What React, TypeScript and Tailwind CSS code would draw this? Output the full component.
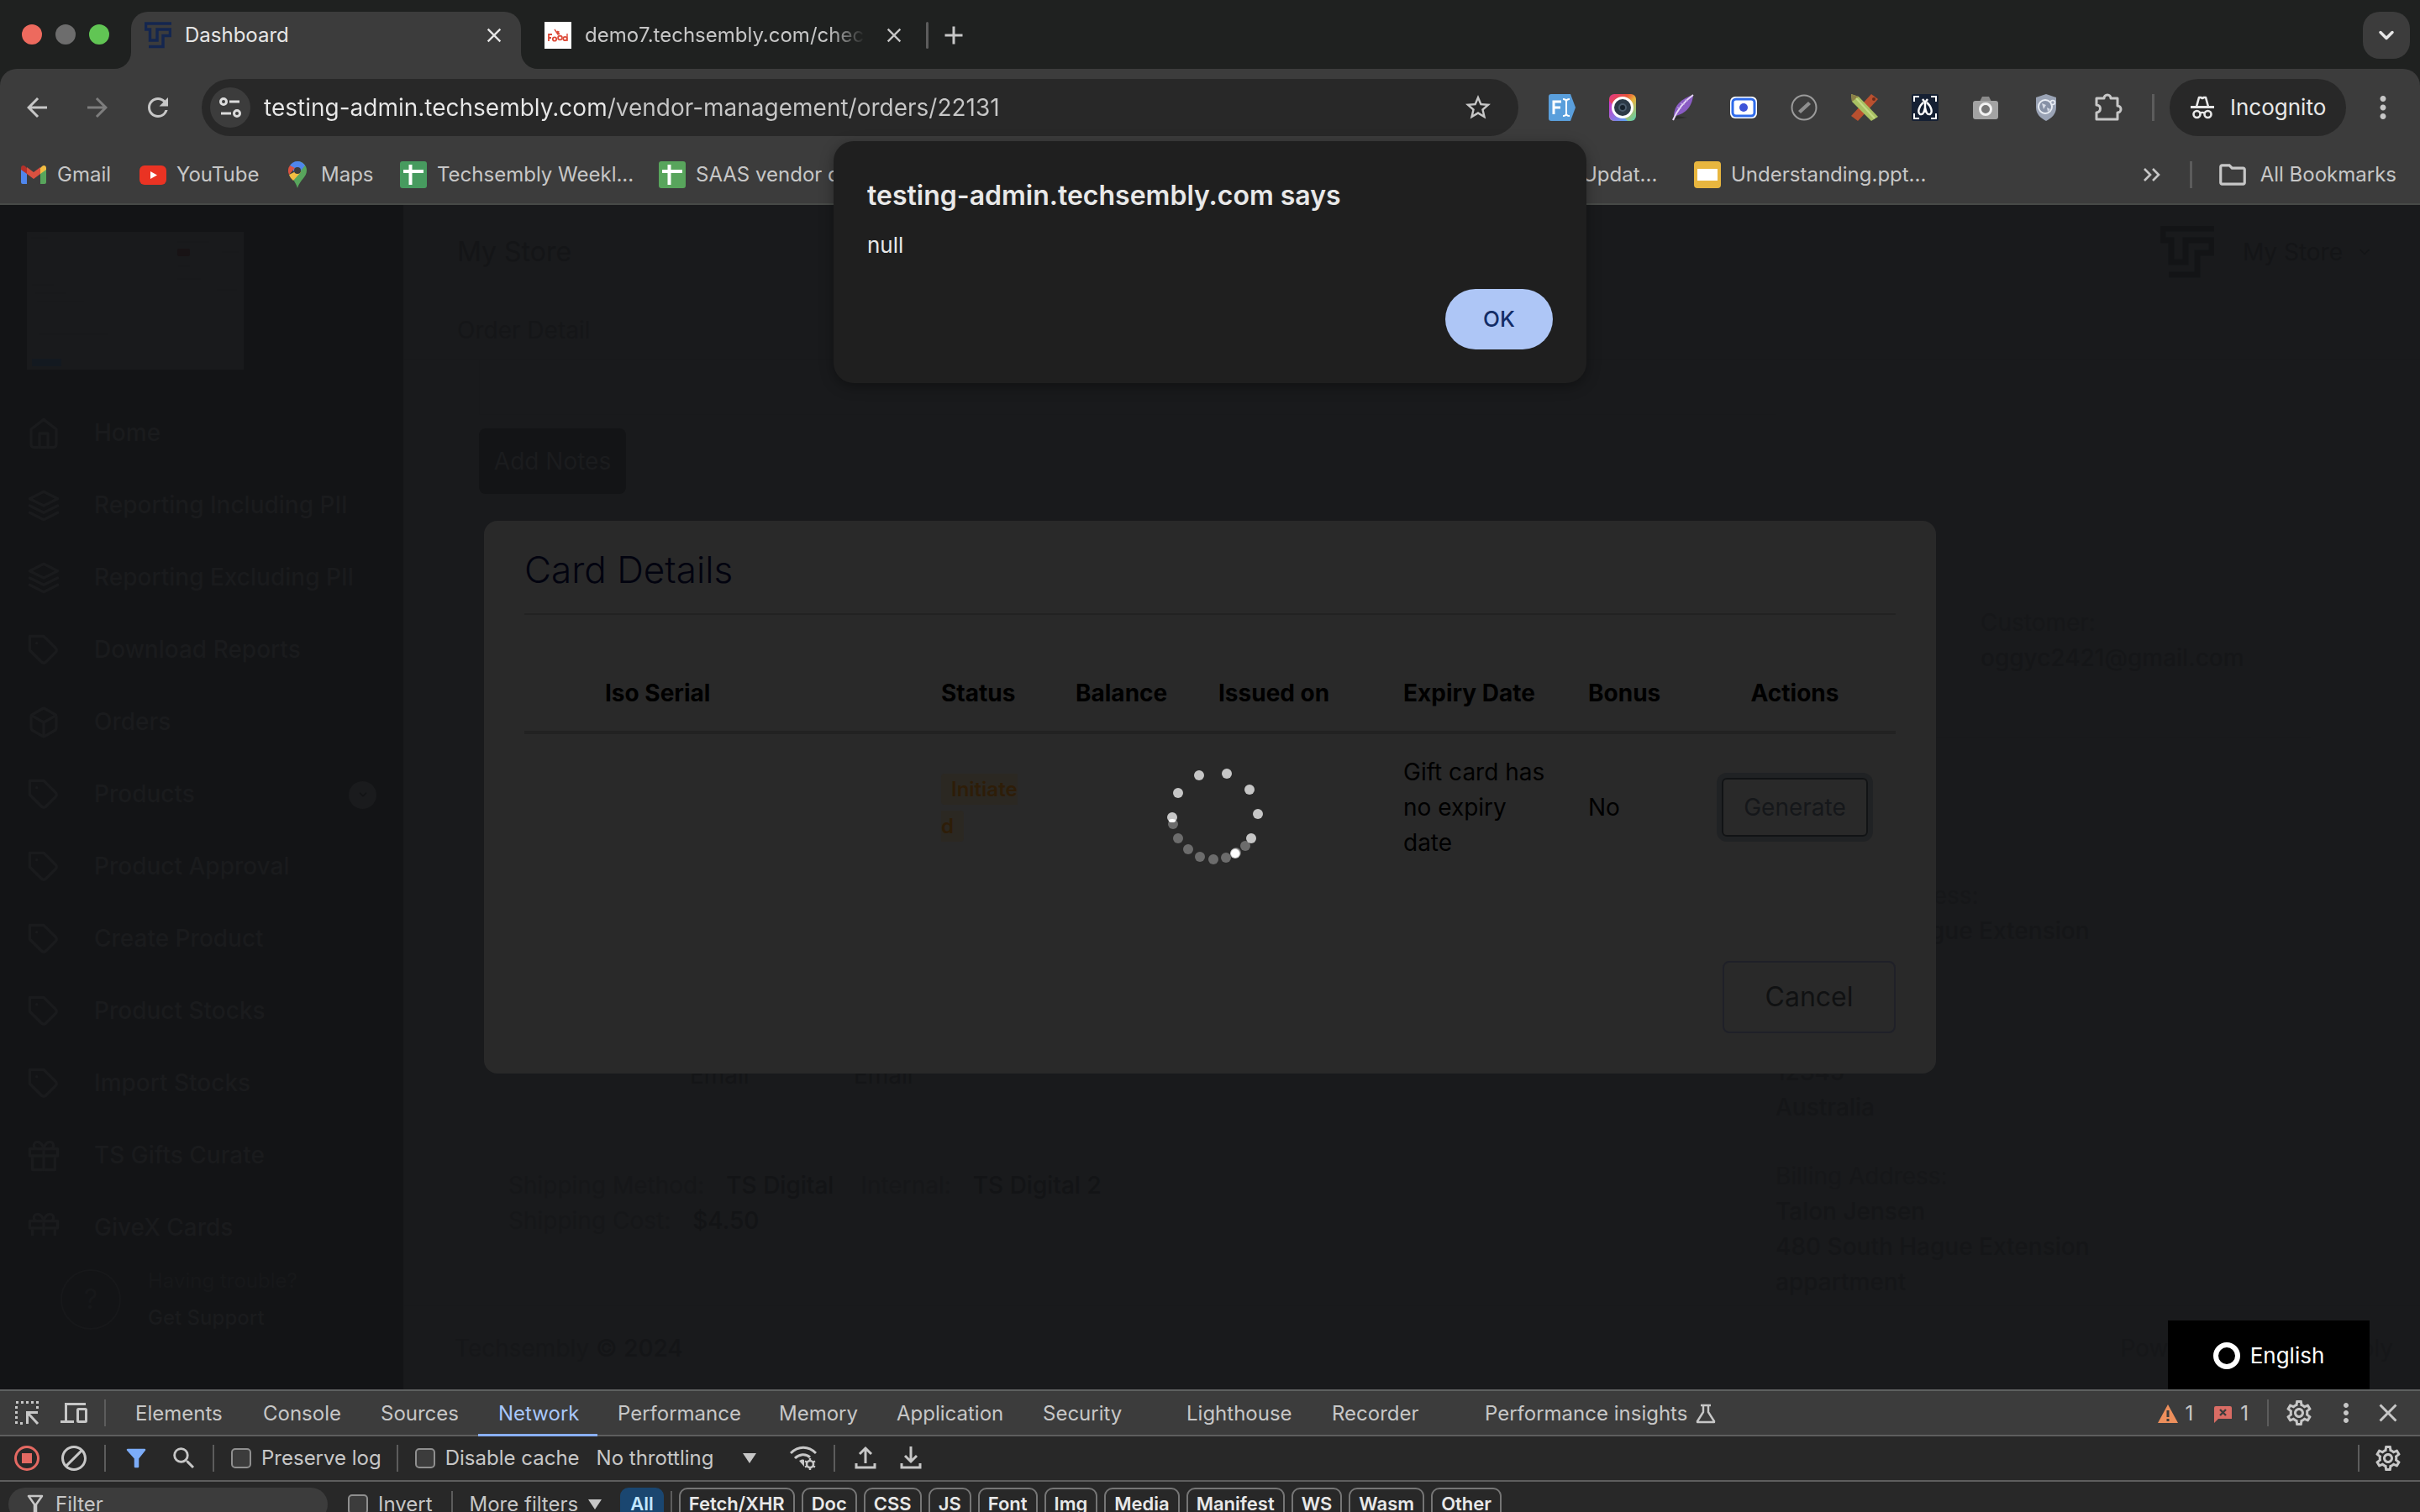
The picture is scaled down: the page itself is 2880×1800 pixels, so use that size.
import type { ReactNode } from "react";
import { FiBox, FiChevronDown, FiGift, FiHome, FiLayers, FiTag } from "react-icons/fi";
import {
  MdAdd,
  MdArrowBack,
  MdArrowForward,
  MdBlock,
  MdClose,
  MdMoreVert,
  MdOutlineFolder,
  MdOutlineSettings,
  MdRefresh,
  MdSearch,
  MdStarBorder,
} from "react-icons/md";

/* ---------- logos and icons ---------- */

function TsLogo({ className }: { className: string }) {
  return (
    <svg viewBox="0 0 64 62" className={className} fill="none" stroke="currentColor" strokeWidth="7" aria-hidden="true">
      <path d="M64 3H3V17H13V43H30V17H61V32H44V58H10" />
    </svg>
  );
}

function FoodLogo() {
  return (
    <svg viewBox="0 0 32 32" className="h-8 w-8 shrink-0" aria-hidden="true">
      <rect width="32" height="32" fill="#fff" />
      <g fill="none" stroke="#dd4b39" strokeWidth="1.8">
        <path d="M5 23V15h4M5 19h3" />
        <circle cx="12" cy="20.500" r="2.200" />
        <circle cx="18.500" cy="19" r="2.400" />
        <circle cx="24.500" cy="20" r="2.200" />
        <path d="M27 14v9M12 9l4 6 1-4M15 11l3 4" strokeWidth="1.400" />
      </g>
    </svg>
  );
}

function SiteInfoIcon() {
  return (
    <svg viewBox="0 0 28 28" className="h-7 w-7" fill="none" stroke="#dcdcdc" strokeWidth="3" aria-hidden="true">
      <circle cx="6" cy="7" r="3.500" />
      <path d="M13 7h12M3 21h12" />
      <circle cx="22" cy="21" r="3.500" />
    </svg>
  );
}

function GmailIcon() {
  return (
    <svg viewBox="0 0 32 32" className="h-8 w-8 shrink-0" aria-hidden="true">
      <path d="M1 8v17a2 2 0 0 0 2 2h5V13z" fill="#4f86ec" />
      <path d="M31 8v17a2 2 0 0 1-2 2h-5V13z" fill="#58a55c" />
      <path d="M24 8v7l7-5V8c0-3-3-4-5-2z" fill="#f2bd42" />
      <path d="M8 8v7l-7-5V8c0-3 3-4 5-2z" fill="#b5312a" />
      <path d="M8 7l8 6 8-6v8l-8 6-8-6z" fill="#d95140" />
    </svg>
  );
}

function YouTubeIcon() {
  return (
    <svg viewBox="0 0 32 32" className="h-8 w-8 shrink-0" aria-hidden="true">
      <rect x="0" y="5" width="32" height="23" rx="6" fill="#ea3323" />
      <path d="M13 12l8 4.500-8 4.500z" fill="#fff" />
    </svg>
  );
}

function MapsIcon() {
  return (
    <svg viewBox="0 0 32 32" className="h-8 w-8 shrink-0" aria-hidden="true">
      <path d="M16 0a11 11 0 0 1 11 11c0 8-8 11-11 21-1-4-3-7-5-10z" fill="#58a55c" />
      <path d="M16 0c4 0 7 2 9 5L15 17 7 5c2-3 5-5 9-5z" fill="#4f86ec" />
      <path d="M7 5a11 11 0 0 0-1 11l7-8z" fill="#d95140" />
      <path d="M6 16c1 3 3 5 5 7l9-10-6-1z" fill="#f2bd42" />
      <circle cx="16" cy="11" r="4" fill="#3c3c3c" />
    </svg>
  );
}

function SheetIcon({ color }: { color: string }) {
  return (
    <svg viewBox="0 0 32 32" className="h-8 w-8 shrink-0" aria-hidden="true">
      <rect width="32" height="32" rx="3" fill={color} />
      <path d="M12.500 4v24M4 12h24" stroke="#fff" strokeWidth="4" />
    </svg>
  );
}

function SlidesIcon() {
  return (
    <svg viewBox="0 0 32 32" className="h-8 w-8 shrink-0" aria-hidden="true">
      <rect width="32" height="32" rx="4" fill="#e8b63f" />
      <rect x="4" y="9" width="24" height="14" fill="#fff" />
    </svg>
  );
}

function IncognitoIcon() {
  return (
    <svg viewBox="0 0 30 28" className="h-7 w-[30px]" fill="none" stroke="#e8e8e8" aria-hidden="true">
      <path d="M1 13.500h28" strokeWidth="3" />
      <path d="M8 13l3-11h2l2 1 2-1h2l3 11" strokeWidth="2.600" strokeLinejoin="round" />
      <circle cx="8.500" cy="22" r="4" strokeWidth="2.600" />
      <circle cx="21.500" cy="22" r="4" strokeWidth="2.600" />
      <path d="M12 21c2-1.500 4-1.500 6 0" strokeWidth="2.400" />
    </svg>
  );
}

function PuzzleIcon() {
  return (
    <svg viewBox="0 0 36 36" className="h-9 w-9" fill="none" stroke="#c7c7c7" strokeWidth="3" strokeLinejoin="round" aria-hidden="true">
      <path d="M4 7h9a4 4 0 0 1 8 0h8v9a4 4 0 0 1 0 8v8H4v-8c6-1 6-9 0-9z" />
    </svg>
  );
}

const extensionIcons: { name: string; art: ReactNode }[] = [
  {
    name: "Form filler",
    art: (
      <>
        <path d="M3 0h23l6 16-6 16H3a3 3 0 0 1-3-3V3a3 3 0 0 1 3-3z" fill="#5a9fdc" />
        <path d="M6 24V9h9M6 16h8" fill="none" stroke="#fff" strokeWidth="3" />
        <path d="M17 6c3 0 4 1 4 3v14c0 2-1 3-4 3M25 6c-3 0-4 1-4 3v14c0 2 1 3 4 3" fill="none" stroke="#fff" strokeWidth="2" />
      </>
    ),
  },
  {
    name: "Screen capture",
    art: (
      <>
        <defs>
          <linearGradient id="capture-a" x1="0" y1="0" x2="1" y2="1">
            <stop offset="0" stopColor="#e0368c" />
            <stop offset=".35" stopColor="#e8533a" />
            <stop offset=".55" stopColor="#e9b23c" />
            <stop offset="1" stopColor="#4fd0b5" />
          </linearGradient>
          <linearGradient id="capture-b" x1="0" y1="0" x2="1" y2="1">
            <stop offset="0" stopColor="#d433c8" />
            <stop offset="1" stopColor="#55a8f5" />
          </linearGradient>
        </defs>
        <rect width="32" height="32" rx="6" fill="url(#capture-a)" />
        <path d="M0 8v18a6 6 0 0 0 6 6h16z" fill="url(#capture-b)" />
        <circle cx="16" cy="16" r="11.500" fill="#2c3a47" stroke="#fff" strokeWidth="3" />
        <circle cx="16" cy="16" r="4" fill="#16212b" stroke="#4a5b6b" strokeWidth="2" />
      </>
    ),
  },
  {
    name: "Feather",
    art: (
      <>
        <path d="M5 30l16-2-12-2z" fill="#2c2c2c" />
        <path d="M28 1C14 5 5 14 5 26c12-1 22-10 23-25z" fill="#8a5cc4" />
        <path d="M28 1C18 8 10 17 4 31" fill="none" stroke="#e6d8f5" strokeWidth="2" />
        <path d="M9 16l5 1M13 11l5 1M18 7l4 1" stroke="#c9aee8" strokeWidth="1" />
      </>
    ),
  },
  {
    name: "Recorder",
    art: (
      <>
        <rect x="0" y="3" width="32" height="26" rx="6" fill="#fff" />
        <rect x="3" y="6" width="26" height="20" rx="4" fill="none" stroke="#2f6bea" strokeWidth="3" />
        <circle cx="16" cy="16" r="5" fill="#3d53d8" />
      </>
    ),
  },
  {
    name: "Ruler",
    art: (
      <>
        <circle cx="16" cy="16" r="14.500" fill="none" stroke="#9b9b9b" strokeWidth="2" />
        <path d="M9 20L21 9l3 3-12 11z" fill="#8f8f8f" />
      </>
    ),
  },
  {
    name: "Pencils",
    art: (
      <>
        <path d="M24 0l8 6L8 32l-8-6z" fill="#b9502f" />
        <circle cx="27" cy="6" r="2" fill="#6b2c1a" />
        <path d="M0 0l9 3 23 24-8 5L1 9z" fill="#a9c163" />
        <path d="M0 0l9 3-8 6z" fill="#8c8047" />
        <path d="M6 5l22 24" stroke="#c5da85" strokeWidth="2" />
      </>
    ),
  },
  {
    name: "Code capture",
    art: (
      <>
        <rect width="32" height="32" rx="2" fill="#152033" />
        <path d="M3 9V3h6M23 3h6v6M29 23v6h-6M9 29H3v-6" fill="none" stroke="#fff" strokeWidth="2" />
        <path d="M13 6l3 4 3-4M16 10v12M14 10c-6 5-7 12-4 14 4 1 5-3 6-8M18 10c6 5 7 12 4 14-4 1-5-3-6-8" fill="none" stroke="#fff" strokeWidth="2.400" />
      </>
    ),
  },
  {
    name: "Camera",
    art: (
      <>
        <path d="M9 9l3-6h8l3 6z" fill="#8b8b8b" />
        <rect x="1" y="8" width="30" height="22" rx="3" fill="#a3a3a3" />
        <circle cx="16" cy="18" r="6.500" fill="#777" stroke="#f2f2f2" strokeWidth="3" />
      </>
    ),
  },
  {
    name: "Shield",
    art: (
      <>
        <path d="M16 0l12 4v12c0 8-6 13-12 16C10 29 4 24 4 16V4z" fill="#9aa3b5" />
        <circle cx="15" cy="15" r="8" fill="#8791a6" stroke="#e9edf4" strokeWidth="2" />
        <path d="M11 11l5 2-3 5zM17 16l4 2-3 3z" fill="#d5dae5" />
        <circle cx="24" cy="10" r="2.500" fill="#9aa3b5" stroke="#e9edf4" strokeWidth="1.500" />
      </>
    ),
  },
];

function FunnelIcon({ className, filled }: { className: string; filled?: boolean }) {
  return (
    <svg viewBox="0 0 24 24" className={className} fill={filled ? "currentColor" : "none"} stroke="currentColor" strokeWidth="2.500" aria-hidden="true">
      <path d={filled ? "M2 2h20l-8 10v10h-3V12z" : "M4 2h16l-7 10v10h-2V12z"} strokeLinejoin="round" />
    </svg>
  );
}

function Caret() {
  return (
    <svg viewBox="0 0 16 12" className="h-3 w-4" fill="currentColor" aria-hidden="true">
      <path d="M0 0h16l-8 12z" />
    </svg>
  );
}

function InspectIcon() {
  return (
    <svg viewBox="0 0 32 32" className="h-8 w-8" fill="none" stroke="currentColor" aria-hidden="true">
      <path d="M3 3.500h27" strokeWidth="3" strokeDasharray="3 3" />
      <path d="M3.500 8v22M28.500 8v4M8 28.500h4" strokeWidth="3" strokeDasharray="3 3" />
      <path d="M29 15.500H16.500V29M17 16l12 13" strokeWidth="3" />
    </svg>
  );
}

function DevicesIcon() {
  return (
    <svg viewBox="0 0 32 32" className="h-8 w-8" fill="none" stroke="currentColor" strokeWidth="3" aria-hidden="true">
      <path d="M30 5.500H6.500V26M0 26.500h16" />
      <rect x="20.500" y="11.500" width="10" height="15" rx="1" />
    </svg>
  );
}

function StopRecordIcon() {
  return (
    <svg viewBox="0 0 32 32" className="h-8 w-8" aria-hidden="true">
      <circle cx="16" cy="16" r="13.500" fill="none" stroke="#e46962" strokeWidth="3" />
      <rect x="10" y="10" width="12" height="12" fill="#e46962" />
    </svg>
  );
}

function NetworkConditionsIcon() {
  return (
    <svg viewBox="0 0 32 32" className="h-8 w-8" fill="none" stroke="currentColor" strokeWidth="3" aria-hidden="true">
      <path d="M1 10c9-9 21-9 30 0M6 16c5-5 13-6 18-1" />
      <path d="M11 19l6 7v-8c-2-1-4 0-6 1z" fill="currentColor" stroke="none" />
      <circle cx="24" cy="23" r="4" strokeWidth="2.600" />
      <path d="M24 16v3M24 27v3M18 19.500l3 1.500M27 25l3 1.500M30 19.500L27 21M21 25l-3 1.500" strokeWidth="2.400" />
    </svg>
  );
}

function TransferIcon({ down }: { down?: boolean }) {
  return (
    <svg viewBox="0 0 32 32" className="h-8 w-8" fill="none" stroke="currentColor" strokeWidth="3" aria-hidden="true">
      <path d={down ? "M16 2v18M9 13l7 7 7-7" : "M16 22V4M9 11l7-7 7 7"} />
      <path d="M5 22v5h22v-5" />
    </svg>
  );
}

function FlaskIcon() {
  return (
    <svg viewBox="0 0 24 24" className="h-6 w-6" fill="none" stroke="currentColor" strokeWidth="2.400" strokeLinejoin="round" aria-hidden="true">
      <path d="M6 2h12M9 2v8L2 21v1h20v-1L15 10V2" />
    </svg>
  );
}

function WarningIcon() {
  return (
    <svg viewBox="0 0 24 24" className="h-6 w-6" aria-hidden="true">
      <path d="M12 1l12 22H0z" fill="#ed8f5c" />
      <path d="M12 8v8M12 18v3" stroke="#3c3c3c" strokeWidth="3" />
    </svg>
  );
}

function IssueIcon() {
  return (
    <svg viewBox="0 0 24 24" className="h-6 w-6" aria-hidden="true">
      <path d="M3 3h17a2 2 0 0 1 2 2v13H6l-5 5V5a2 2 0 0 1 2-2z" fill="#d96c64" />
      <path d="M8 7l7 7M15 7l-7 7" stroke="#3c3c3c" strokeWidth="2.400" />
    </svg>
  );
}

function StoreThumbnail() {
  return (
    <svg viewBox="0 0 258 164" className="ml-8 mt-8 h-[164px] w-[258px]" aria-hidden="true">
      <rect width="258" height="164" fill="#191a1c" />
      <rect x="179" y="20" width="15" height="9" rx="2" fill="#181315" />
      <rect x="6" y="151" width="35" height="9" rx="1" fill="#131920" />
      <path d="M5 7h20M179 12h38M6 63h26M10 73h36M12 83h56M14 122h82M226 69h24M179 56h28M180 41h14M232 24h20" stroke="#18191b" strokeWidth="2" />
    </svg>
  );
}

/* ---------- shared pieces ---------- */

function Divider({ className }: { className: string }) {
  return <span aria-hidden="true" className={`h-8 shrink-0 bg-[#5c5c5c] ${className}`} />;
}

function CheckOption({ id, label, className }: { id: string; label: string; className: string }) {
  return (
    <div className={`flex items-center gap-3 ${className}`}>
      <input id={id} type="checkbox" className="h-6 w-6 appearance-none rounded-[5px] border-2 border-[#8f8f8f] bg-[#3c3c3c]" />
      <label htmlFor={id}>{label}</label>
    </div>
  );
}

/* ---------- browser chrome ---------- */

function TabStrip() {
  return (
    <div className="flex h-[82px] shrink-0 items-end">
      <div className="flex h-[82px] items-center gap-4 pl-[26px]">
        <span className="h-6 w-6 rounded-full bg-[#ed6a5e]" />
        <span className="h-6 w-6 rounded-full bg-[#6d6d6d]" />
        <span className="h-6 w-6 rounded-full bg-[#61c554]" />
      </div>
      <div className="relative ml-[26px] flex h-[68px] w-[464px] items-center rounded-t-[20px] bg-[#3c3c3c] pb-3 pl-4 pr-[18px] text-[#e6e6e6]">
        <svg viewBox="0 0 20 20" className="absolute -left-5 bottom-0 h-5 w-5" fill="#3c3c3c" aria-hidden="true">
          <path d="M20 0v20H0A20 20 0 0 0 20 0z" />
        </svg>
        <svg viewBox="0 0 20 20" className="absolute -right-5 bottom-0 h-5 w-5" fill="#3c3c3c" aria-hidden="true">
          <path d="M0 0v20h20A20 20 0 0 1 0 0z" />
        </svg>
        <TsLogo className="h-8 w-8 text-[#14264f]" />
        <span className="ml-4">Dashboard</span>
        <button type="button" aria-label="Close Dashboard" className="ml-auto">
          <MdClose size={28} />
        </button>
      </div>
      <div className="flex h-[68px] items-center pb-3 text-[#c7c7c7]">
        <span className="ml-7">
          <FoodLogo />
        </span>
        <span className="ml-4 w-[334px] overflow-hidden whitespace-nowrap [mask-image:linear-gradient(90deg,#000_290px,transparent_334px)]">
          demo7.techsembly.com/checkout
        </span>
        <button type="button" aria-label="Close checkout" className="ml-5">
          <MdClose size={28} />
        </button>
        <Divider className="ml-6 w-[3px] rounded-full" />
        <button type="button" aria-label="New tab" className="ml-3">
          <MdAdd size={36} />
        </button>
      </div>
      <button
        type="button"
        aria-label="Search tabs"
        className="mb-3 ml-auto mr-3 flex h-14 w-14 items-center justify-center rounded-[20px] bg-[#3c3c3c] text-[#e6e6e6]"
      >
        <FiChevronDown size={28} strokeWidth={3} />
      </button>
    </div>
  );
}

function AddressBar() {
  return (
    <div className="flex h-[92px] items-center text-[#c7c7c7]">
      <div className="flex gap-9 pl-[26px]">
        <button type="button" aria-label="Back">
          <MdArrowBack size={36} />
        </button>
        <button type="button" aria-label="Forward" className="text-[#7d7d7d]">
          <MdArrowForward size={36} />
        </button>
        <button type="button" aria-label="Reload">
          <MdRefresh size={36} />
        </button>
      </div>
      <div className="ml-[34px] flex h-[68px] flex-1 items-center rounded-full bg-[#282828] pl-[10px] pr-[30px]">
        <button type="button" aria-label="Site information" className="flex h-12 w-12 items-center justify-center rounded-full bg-[#3c3c3c]">
          <SiteInfoIcon />
        </button>
        <input
          aria-label="Address"
          type="text"
          defaultValue="testing-admin.techsembly.com/vendor-management/orders/22131"
          className="ml-4 flex-1 bg-[linear-gradient(90deg,#e8e8e8_410px,#c7c7c7_410px)] bg-clip-text pt-0.5 text-[28px] text-transparent outline-none"
        />
        <button type="button" aria-label="Bookmark this page">
          <MdStarBorder size={36} />
        </button>
      </div>
      <div className="ml-9 flex gap-10">
        {extensionIcons.map((icon) => (
          <button key={icon.name} type="button" aria-label={icon.name}>
            <svg viewBox="0 0 32 32" className="h-8 w-8" aria-hidden="true">
              {icon.art}
            </svg>
          </button>
        ))}
      </div>
      <button type="button" aria-label="Extensions" className="ml-10">
        <PuzzleIcon />
      </button>
      <Divider className="ml-[34px] w-[3px]" />
      <button type="button" className="ml-[18px] flex h-[68px] w-[210px] items-center gap-[18px] rounded-full bg-[#282828] pl-6 text-[26px] text-[#e8e8e8]">
        <IncognitoIcon />
        Incognito
      </button>
      <button type="button" aria-label="Menu" className="ml-[23px] mr-[23px]">
        <MdMoreVert size={42} />
      </button>
    </div>
  );
}

function Bookmark({ icon, label, className }: { icon?: ReactNode; label: string; className: string }) {
  return (
    <a href="#" className={`flex shrink-0 items-center gap-3 whitespace-nowrap ${className}`}>
      {icon}
      {label}
    </a>
  );
}

function BookmarksBar() {
  return (
    <nav aria-label="Bookmarks" className="flex h-[68px] items-center pl-6 text-[#c7c7c7]">
      <Bookmark icon={<GmailIcon />} label="Gmail" className="w-[142px]" />
      <Bookmark icon={<YouTubeIcon />} label="YouTube" className="w-[172px]" />
      <Bookmark icon={<MapsIcon />} label="Maps" className="w-[138px]" />
      <Bookmark icon={<SheetIcon color="#479b5f" />} label="Techsembly Weekl..." className="w-[308px]" />
      <Bookmark icon={<SheetIcon color="#58a55c" />} label="SAAS vendor d..." className="w-[308px]" />
      <Bookmark label="Updat..." className="ml-[791px] w-[133px]" />
      <Bookmark icon={<SlidesIcon />} label="Understanding.ppt..." className="" />
      <button type="button" aria-label="More bookmarks" className="ml-auto">
        <svg viewBox="0 0 24 24" className="h-6 w-6" fill="none" stroke="currentColor" strokeWidth="2.600" aria-hidden="true">
          <path d="M3 5l7 7-7 7M13 5l7 7-7 7" />
        </svg>
      </button>
      <Divider className="ml-[33px] w-[3px]" />
      <a href="#" className="ml-[29px] mr-7 flex items-center gap-[14px]">
        <MdOutlineFolder size={38} />
        All Bookmarks
      </a>
    </nav>
  );
}

function AlertDialog() {
  return (
    <div
      role="alertdialog"
      aria-labelledby="alert-title"
      aria-describedby="alert-text"
      className="absolute left-1/2 top-[168px] z-20 flex w-[896px] -translate-x-1/2 flex-col rounded-3xl bg-[#1f1f1f] p-10 text-[#e8e8e8] shadow-[0_4px_16px_rgba(0,0,0,0.35)]"
    >
      <h2 id="alert-title" className="mt-1 text-[32px] font-semibold leading-[42px]">
        testing-admin.techsembly.com says
      </h2>
      <p id="alert-text" className="mt-[18px] text-[26px] leading-[40px]">
        null
      </p>
      <button type="button" className="mt-8 h-[72px] w-32 self-end rounded-full bg-[#aec6f6] text-[26px] font-medium text-[#132c66]">
        OK
      </button>
    </div>
  );
}

/* ---------- page ---------- */

const menu = [
  { label: "Home", Icon: FiHome },
  { label: "Reporting Including PII", Icon: FiLayers },
  { label: "Reporting Excluding PII", Icon: FiLayers },
  { label: "Download Reports", Icon: FiTag },
  { label: "Orders", Icon: FiBox },
  { label: "Products", Icon: FiTag, expandable: true },
  { label: "Product Approval", Icon: FiTag },
  { label: "Create Product", Icon: FiTag },
  { label: "Product Stocks", Icon: FiTag },
  { label: "Import Stocks", Icon: FiTag },
  { label: "TS Gifts Curate", Icon: FiGift },
  { label: "GiveX Cards", Icon: FiGift },
];

function Sidebar() {
  return (
    <aside className="flex w-[480px] shrink-0 flex-col bg-[#131416]">
      <StoreThumbnail />
      <ul className="mt-[33px] min-h-0 flex-1 overflow-hidden text-[28px] font-medium text-[#1a1b1d]">
        {menu.map(({ label, Icon, expandable }) => (
          <li key={label}>
            <a href="#" className="flex h-[86px] items-center gap-10 px-8">
              <Icon size={40} />
              {label}
              {expandable && (
                <span className="ml-auto flex h-[33px] w-[33px] items-center justify-center rounded-full bg-[#1a1b1d] text-[#131416]">
                  <FiChevronDown size={14} strokeWidth={3} />
                </span>
              )}
            </a>
          </li>
        ))}
      </ul>
      <div className="flex h-[183px] shrink-0 items-start gap-8 pl-[72px] pt-8 leading-[44px] text-[#1a1b1d]">
        <span className="mt-2 flex h-[72px] w-[72px] items-center justify-center rounded-full border-2 border-[#17181a] text-[32px] text-[#17181a]">?</span>
        <div>
          <p className="text-[#17181a]">Having trouble?</p>
          <a href="#" className="font-medium">
            Get Support
          </a>
        </div>
      </div>
    </aside>
  );
}

function OrderPage() {
  return (
    <main className="flex min-w-0 flex-1 flex-col bg-[#191a1c] text-[28px] leading-[42px] text-[#141517]">
      <header className="flex h-28 shrink-0 items-center pl-16 pr-14">
        <h1 className="text-[32px]">My Store</h1>
        <TsLogo className="ml-auto h-[62px] w-16 text-[#131416]" />
        <button type="button" className="ml-[34px] flex items-center gap-4">
          My Store
          <FiChevronDown size={20} />
        </button>
      </header>
      <h2 className="h-[72px] shrink-0 border-b border-[#18191b] pl-16 pt-4 text-[#151618]">Order Detail</h2>
      <div className="flex min-h-0 flex-1">
        <section className="ml-[90px] flex-1">
          <div className="h-[66px] border-b border-l border-[#18191b]" />
          <button type="button" className="mt-4 h-[78px] w-[175px] rounded-lg bg-[#131416] text-[#1b1c1e]">
            Add Notes
          </button>
          <div className="mt-[671px] flex pl-[251px]">
            <span className="w-[195px]">Email</span>
            <span>Email</span>
          </div>
          <dl className="mt-[89px] pl-[35px] text-[#161719]">
            <div className="flex gap-[26px]">
              <dt>Shipping Method:</dt>
              <dd className="mr-1.5 font-medium text-[#131416]">TS Digital</dd>
              <dt>Internal:</dt>
              <dd className="font-medium text-[#131416]">TS Digital 2</dd>
            </div>
            <div className="flex gap-[26px]">
              <dt>Shipping Cost:</dt>
              <dd className="font-medium text-[#131416]">$4.50</dd>
            </div>
          </dl>
        </section>
        <section className="mr-[130px] w-[637px] shrink-0 font-medium text-[#151618]">
          <div className="mt-[292px] border-b border-[#18191b] pb-[74px] pl-[244px]">
            <p className="font-normal text-[#161719]">Customer:</p>
            <p>oggyc2421@gmail.com</p>
          </div>
          <p className="mt-[166px] font-normal text-[#161719]">Shipping Address:</p>
          <p>480 South Hague Extension</p>
          <p className="mt-[126px]">12345</p>
          <p>Australia</p>
          <p className="mt-10 font-normal text-[#161719]">Billing Address:</p>
          <p>Talon Jensen</p>
          <p>480 South Hague Extension</p>
          <p>appartment</p>
        </section>
      </div>
      <footer className="flex h-[100px] shrink-0 items-center justify-between border-t border-[#18191b] pl-[61px] pr-8 text-[#161719]">
        <p>
          Techsembly <span className="font-medium text-[#141517]">© 2024</span>
        </p>
        <p>Powered by Techsembly</p>
      </footer>
    </main>
  );
}

const columns = [
  { label: "Iso Serial", className: "w-[496px] pl-24 text-left" },
  { label: "Status", className: "w-[160px] text-left" },
  { label: "Balance", className: "w-[170px] text-left" },
  { label: "Issued on", className: "w-[220px] text-left" },
  { label: "Expiry Date", className: "w-[220px] text-left" },
  { label: "Bonus", className: "w-[126px] text-left" },
  { label: "Actions", className: "w-[240px] text-center" },
];

function CardDetailsModal() {
  return (
    <div className="absolute inset-0 flex justify-center">
      <section
        role="dialog"
        aria-labelledby="card-title"
        className="mt-[376px] flex w-3/5 flex-col self-start rounded-2xl bg-[#292929] px-12 pb-12 pt-[26px] text-[28px] leading-[42px] text-black"
      >
        <h2 id="card-title" className="border-b-2 border-[#222222] pb-5 text-[44px] font-light leading-[64px] text-[#02030f]">
          Card Details
        </h2>
        <table className="mt-12 w-full table-fixed border-collapse">
          <thead>
            <tr className="h-[92px] border-b-4 border-[#222222]">
              {columns.map((column) => (
                <th key={column.label} scope="col" className={`font-bold ${column.className}`}>
                  {column.label}
                </th>
              ))}
            </tr>
          </thead>
          <tbody>
            <tr>
              <td />
              <td className="break-all pr-[68px]">
                <span className="rounded bg-[#2b2822] px-3 py-1 text-2xl font-semibold leading-[42px] text-[#2e1d08]">Initiated</span>
              </td>
              <td />
              <td />
              <td className="py-6 pr-10">Gift card has no expiry date</td>
              <td>No</td>
              <td className="text-center">
                <button type="button" className="h-[70px] w-[174px] rounded-md border-2 border-[#111315] text-[#15171a] ring-[6px] ring-[#202224]">
                  Generate
                </button>
              </td>
            </tr>
          </tbody>
        </table>
        <button type="button" className="mt-24 h-[86px] w-[206px] self-end rounded-lg border-2 border-[#1f2028] text-[32px] text-[#101112]">
          Cancel
        </button>
      </section>
    </div>
  );
}

const brightDots = [
  [53, 17],
  [86, 15],
  [113, 34],
  [123, 63],
  [115, 92],
  [96, 110],
  [21, 67],
  [28, 38],
];
const dimDots = [
  [22, 75],
  [28, 92],
  [40, 105],
  [54, 114],
  [70, 117],
  [85, 115],
  [108, 101],
  [97, 109],
];

function LoadingSpinner() {
  return (
    <div role="status" aria-label="Loading" className="absolute inset-0 flex justify-center pt-[662px]">
      <svg viewBox="0 0 132 132" className="h-[132px] w-[132px]" aria-hidden="true">
        {dimDots.map(([x, y]) => (
          <circle key={`${x}-${y}`} cx={x} cy={y} r="6" fill="#6c6c6c" />
        ))}
        {brightDots.map(([x, y]) => (
          <circle key={`${x}-${y}`} cx={x} cy={y} r="6" fill="#c6c6c6" />
        ))}
        <circle cx="96" cy="110" r="5" fill="#fff" />
        <ellipse cx="21" cy="71" rx="4" ry="2" fill="#fff" />
      </svg>
    </div>
  );
}

/* ---------- developer tools ---------- */

const panels = [
  { label: "Elements", className: "w-[152px]" },
  { label: "Console", className: "w-[140px]" },
  { label: "Sources", className: "w-[140px]" },
  { label: "Network", className: "w-[142px] text-[#a8c7fa] shadow-[inset_0_-3px_#8ab0f5]", active: true },
  { label: "Performance", className: "w-[192px]" },
  { label: "Memory", className: "w-[140px]" },
  { label: "Application", className: "w-[174px]" },
  { label: "Security", className: "w-[171px]" },
  { label: "Lighthouse", className: "w-[173px]" },
  { label: "Recorder", className: "w-[182px]" },
];

const resourceTypes = ["Fetch/XHR", "Doc", "CSS", "JS", "Font", "Img", "Media", "Manifest", "WS", "Wasm", "Other"];

function DevTools() {
  return (
    <section aria-label="Developer tools" className="h-[146px] shrink-0 overflow-hidden border-t-2 border-[#5e6060] bg-[#282828] text-[#c7c7c7]">
      <div className="flex h-[54px] items-center border-b-2 border-[#5e5e5e] bg-[#3c3c3c] pl-4 pr-5">
        <button type="button" aria-label="Inspect element">
          <InspectIcon />
        </button>
        <button type="button" aria-label="Toggle device toolbar" className="ml-6">
          <DevicesIcon />
        </button>
        <Divider className="ml-5 mr-[11px] w-0.5" />
        <div role="tablist" className="-mb-0.5 flex self-stretch">
          {panels.map((panel) => (
            <button
              key={panel.label}
              type="button"
              role="tab"
              aria-selected={panel.active ?? false}
              className={`pl-6 text-left ${panel.className}`}
            >
              {panel.label}
            </button>
          ))}
          <button type="button" role="tab" aria-selected={false} className="flex items-center gap-[10px] pl-6">
            Performance insights
            <FlaskIcon />
          </button>
        </div>
        <button type="button" aria-label="Warnings and issues" className="ml-auto flex items-center pt-0.5">
          <WarningIcon />
          <span className="ml-2">1</span>
          <span className="ml-6">
            <IssueIcon />
          </span>
          <span className="ml-2">1</span>
        </button>
        <Divider className="ml-[22px] w-0.5" />
        <button type="button" aria-label="Settings" className="ml-[18px]">
          <MdOutlineSettings size={36} />
        </button>
        <button type="button" aria-label="More options" className="ml-5">
          <MdMoreVert size={36} />
        </button>
        <button type="button" aria-label="Close developer tools" className="ml-[14px]">
          <MdClose size={36} />
        </button>
      </div>

      <div className="flex h-[54px] items-center border-b-2 border-[#5e5e5e] pl-4 pr-5">
        <button type="button" aria-label="Stop recording">
          <StopRecordIcon />
        </button>
        <button type="button" aria-label="Clear" className="ml-[22px]">
          <MdBlock size={36} />
        </button>
        <Divider className="ml-[18px] w-0.5" />
        <button type="button" aria-label="Filter" className="ml-6 text-[#7cacf8]">
          <FunnelIcon className="h-6 w-6" filled />
        </button>
        <button type="button" aria-label="Search" className="ml-7">
          <MdSearch size={34} />
        </button>
        <Divider className="ml-[17px] w-0.5" />
        <CheckOption id="preserve-log" label="Preserve log" className="ml-5" />
        <Divider className="ml-[18px] w-0.5" />
        <CheckOption id="disable-cache" label="Disable cache" className="ml-5" />
        <div className="relative ml-5 flex items-center">
          <select aria-label="Throttling" className="w-[190px] appearance-none bg-transparent outline-none">
            <option>No throttling</option>
          </select>
          <span className="pointer-events-none absolute right-0">
            <Caret />
          </span>
        </div>
        <button type="button" aria-label="Network conditions" className="ml-10">
          <NetworkConditionsIcon />
        </button>
        <Divider className="ml-5 w-0.5" />
        <button type="button" aria-label="Import HAR file" className="ml-5">
          <TransferIcon />
        </button>
        <button type="button" aria-label="Export HAR file" className="ml-[22px]">
          <TransferIcon down />
        </button>
        <Divider className="ml-auto w-0.5" />
        <button type="button" aria-label="Network settings" className="ml-4">
          <MdOutlineSettings size={36} />
        </button>
      </div>

      <div className="flex h-[54px] items-center pl-[10px]">
        <div className="flex h-10 w-[380px] items-center gap-3 rounded-full bg-[#3c3c3c] pl-5">
          <FunnelIcon className="h-6 w-6" />
          <input type="text" aria-label="Filter requests" placeholder="Filter" className="min-w-0 flex-1 bg-transparent outline-none placeholder:text-[#c7c7c7]" />
        </div>
        <CheckOption id="invert" label="Invert" className="ml-6" />
        <Divider className="ml-[22px] w-0.5" />
        <button type="button" className="ml-5 flex items-center gap-3">
          More filters
          <Caret />
        </button>
        <div className="ml-[22px] flex items-center gap-2 text-[22px] font-semibold text-[#e8e8e8]">
          <button type="button" className="h-10 rounded-[10px] bg-[#1a4670] px-3 text-[#c2e7ff]">
            All
          </button>
          <Divider className="w-0.5" />
          {resourceTypes.map((type) => (
            <button key={type} type="button" className="h-10 rounded-[10px] border-2 border-[#757575] px-[10px]">
              {type}
            </button>
          ))}
        </div>
      </div>
    </section>
  );
}

export default function App() {
  return (
    <div className="relative flex h-screen flex-col overflow-hidden bg-[#1f2120] font-['Inter',sans-serif] text-2xl">
      <TabStrip />
      <div className="shrink-0 rounded-t-[20px] border-b-2 border-[#474a47] bg-[#3c3c3c]">
        <AddressBar />
        <BookmarksBar />
      </div>
      <div className="relative flex min-h-0 flex-1 overflow-hidden">
        <Sidebar />
        <OrderPage />
        <CardDetailsModal />
        <LoadingSpinner />
        <button type="button" className="absolute bottom-0 right-[60px] flex h-[82px] w-60 items-center justify-center gap-3 bg-black pt-0.5 text-[26px] text-white">
          <span className="h-8 w-8 rounded-full border-[6px] border-white" />
          English
        </button>
      </div>
      <DevTools />
      <AlertDialog />
    </div>
  );
}
